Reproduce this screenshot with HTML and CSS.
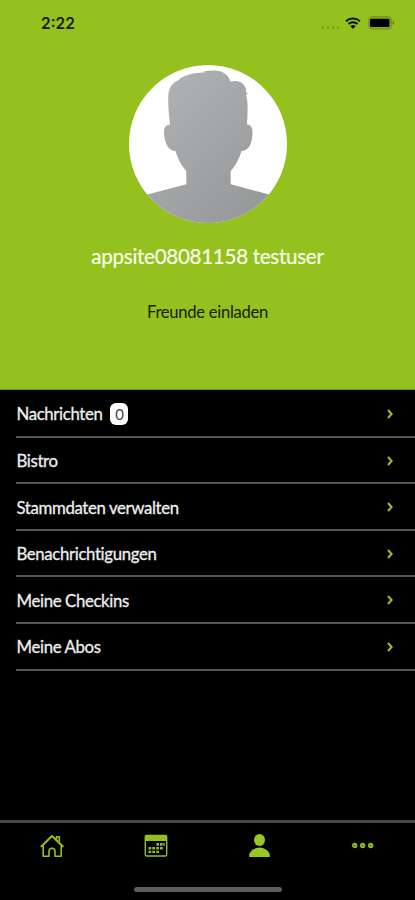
FILE: index.html
```html
<!DOCTYPE html>
<html lang="de">

<head>
	<meta charset="UTF-8">
	<meta name="viewport" content="width=device-width, initial-scale=1.0">
	<title>Profil</title>
	<link rel="stylesheet" href="styles.css">
</head>

<body>
	<header class="profile">
		<div class="status">
			<span class="time">2:22</span>
			<div class="signal"><i></i><i></i><i></i><i></i></div>
			<svg class="wifi" width="16" height="12" viewBox="0 0 16 12">
				<path d="M1 4.3a10.3 10.3 0 0 1 14 0M3.4 7a6.8 6.8 0 0 1 9.2 0" fill="none" stroke="#0b1000" stroke-width="1.9" />
				<path d="M8 12 5.4 9.2a3.8 3.8 0 0 1 5.2 0Z" fill="#0b1000" />
			</svg>
			<svg class="battery" width="27" height="14" viewBox="0 0 27 14">
				<rect x=".7" y=".8" width="22.8" height="12.2" rx="3.2" fill="#86ac20" stroke="#6f9118" stroke-width="1" />
				<rect x="2" y="2.8" width="19.5" height="8.2" rx="1.2" fill="#000" />
				<path d="M24.6 4.8q3 2.1 0 4.2Z" fill="#57720f" />
			</svg>
		</div>
		<svg class="avatar" width="158" height="158" viewBox="0 0 158 158">
			<defs>
				<linearGradient id="shade" x1="0" y1="0" x2="1" y2="1">
					<stop offset="0" stop-color="#b5b6b8" />
					<stop offset="1" stop-color="#929395" />
				</linearGradient>
			</defs>
			<path fill="url(#shade)" d="M41 59.5C40 49 38.5 38 39.5 28C41 21 44 17 51 14.5L50 14C57 9.5 66 7.5 76 7.5L74.5 6.5C81 5 88 5 92 6.5C97 8.5 100 12 101.7 16.7C106 15.5 111 16 114 19C116.5 21.5 117.5 24 117 27L119 29L117 29.5C119.5 38 118.5 49 118 59.5C122 59.5 124 63 123.5 69C123 78 120 86 112.5 86C110 94 107 100 101.7 106V119.3L139.3 129.3L158 136V158H0V136L19.3 129.3L57.3 119.3V106C52 100 49 94 46.5 86C39 86 36 78 35 69C34.5 63 37 59.5 41 59.5Z" />
		</svg>
		<h1>appsite08081158 testuser</h1>
		<a class="invite">Freunde einladen</a>
	</header>

	<ul class="menu">
		<li><span>Nachrichten</span><span class="badge">0</span><svg class="arrow" viewBox="0 0 6 10"><path d="M1 1 4.6 5 1 9" /></svg></li>
		<li><span>Bistro</span><svg class="arrow" viewBox="0 0 6 10"><path d="M1 1 4.6 5 1 9" /></svg></li>
		<li><span>Stammdaten verwalten</span><svg class="arrow" viewBox="0 0 6 10"><path d="M1 1 4.6 5 1 9" /></svg></li>
		<li><span>Benachrichtigungen</span><svg class="arrow" viewBox="0 0 6 10"><path d="M1 1 4.6 5 1 9" /></svg></li>
		<li><span>Meine Checkins</span><svg class="arrow" viewBox="0 0 6 10"><path d="M1 1 4.6 5 1 9" /></svg></li>
		<li><span>Meine Abos</span><svg class="arrow" viewBox="0 0 6 10"><path d="M1 1 4.6 5 1 9" /></svg></li>
	</ul>

	<footer>
		<nav class="tabs">
			<a>
				<svg width="24" height="24" viewBox="0 0 24 24" fill="none" stroke="#93c01f" stroke-width="1.6" stroke-linejoin="round" stroke-linecap="round">
					<path d="M3.2 12V22.3H9V17.3Q9 14.3 12 14.3T15 17.3V22.3H21.2V12" />
					<path d="M1.5 12.2 12 2 22.7 12.2" stroke-width="2" />
					<path d="M16.5 5V2.8H19.3V8" />
				</svg>
			</a>
			<a>
				<svg width="24" height="24" viewBox="0 0 24 24">
					<rect x="1.3" y="1.5" width="21.4" height="20.5" rx="1.2" fill="none" stroke="#93c01f" stroke-width="1.4" />
					<path d="M1.5 2H22.5V7H1.5ZM12.5 9h2.5v2.8h-2.5zM16 9h2.5v2.8h-2.5zM19.2 9h1.5v2.8h-1.5zM4.5 13h2.7v2.5h-2.7zM8.3 13h2.7v2.5h-2.7zM12.2 13h2.7v2.5h-2.7zM16 13h2.7v2.5h-2.7zM4.5 16.8h2.7v2.3h-2.7zM8.3 16.8h2.7v2.3h-2.7zM12.2 16.8h2.7v2.3h-2.7z" fill="#93c01f" />
				</svg>
			</a>
			<a>
				<svg width="24" height="24" viewBox="0 0 24 24" fill="#97c81f">
					<ellipse cx="12.5" cy="6" rx="5.5" ry="6" />
					<path d="M2.2 23V20.5C3.5 16.5 7 14 12.5 13.5C18 14 21.5 16.5 22.8 20.5V23Z" />
				</svg>
			</a>
			<a>
				<svg width="24" height="24" viewBox="0 0 24 24" fill="#6d9020" stroke="#93c01f" stroke-width="1.3">
					<circle cx="3.7" cy="11.5" r="2" />
					<circle cx="11.7" cy="11.5" r="2" />
					<circle cx="19.7" cy="11.5" r="2" />
				</svg>
			</a>
		</nav>
		<div class="home-bar"></div>
	</footer>
</body>

</html>
```
FILE: styles.css
```css
* {
	box-sizing: border-box;
}

body {
	height: 100vh;
	margin: 0;
	display: flex;
	flex-direction: column;
	font-family: Lato, sans-serif;
	font-variant-ligatures: none;
	background: #000;
}

.profile {
	height: 390px;
	display: flex;
	flex-direction: column;
	align-items: center;
	background: #95c11f;
	border-bottom: 1px solid #718f20;
}

.status {
	width: 100%;
	height: 65px;
	padding: 13px 20px 0 41px;
	display: flex;
	align-items: flex-start;
}

.time {
	font: 600 15.5px/22px Inter, sans-serif;
	color: #172000;
	margin-right: auto;
}

.signal {
	display: flex;
	gap: 2.5px;
	margin: 13px 6px 0 0;
}

.signal i {
	width: 2.5px;
	height: 2.5px;
	border-radius: 50%;
	background: #7b9e1d;
}

.wifi {
	margin: 4px 7px 0 0;
}

.battery {
	margin-top: 3px;
}

.avatar {
	flex: none;
	border-radius: 50%;
	background: #fff;
	margin-left: 1px;
}

h1 {
	margin: 20px 0 0;
	font-size: 20.6px;
	line-height: 26px;
	font-weight: 400;
	letter-spacing: -0.3px;
	color: #f8fde9;
	-webkit-text-stroke: 0.2px;
}

.invite {
	margin-top: 33px;
	font-size: 16.6px;
	line-height: 20px;
	letter-spacing: -0.28px;
	color: #172000;
}

.menu {
	list-style: none;
	margin: 0;
	padding: 1px 0 0 16px;
}

.menu li {
	height: 46.6px;
	display: flex;
	align-items: center;
	color: #eee;
	font-size: 16.8px;
	letter-spacing: -0.36px;
	-webkit-text-stroke: 0.3px;
	border-bottom: 2px solid #555;
	padding: 1.4px 22px 0 0.5px;
}

.badge {
	width: 18px;
	height: 22px;
	margin-left: 8px;
	border-radius: 6px;
	background: #fff;
	color: #444;
	font-size: 15px;
	line-height: 22px;
	text-align: center;
	-webkit-text-stroke: 0;
}

.arrow {
	width: 6px;
	height: 10px;
	margin: 0 0 0 auto;
	fill: none;
	stroke: #9bbf2c;
	stroke-width: 2;
}

footer {
	height: 80px;
	margin-top: auto;
	border-top: 3px solid #484848;
}

.tabs {
	display: flex;
	padding-top: 11px;
}

.tabs a {
	flex: 1;
	height: 24px;
	text-align: center;
}

.home-bar {
	width: 148px;
	height: 5px;
	margin: 29px auto 0;
	border-radius: 3px;
	background: #5c5c5c;
}
```
